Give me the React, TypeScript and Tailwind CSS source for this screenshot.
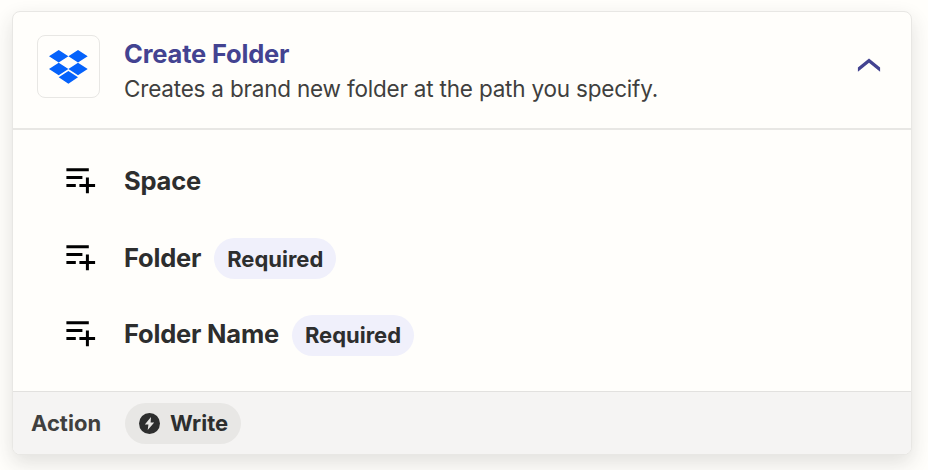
import type { ReactNode } from "react";

function DropboxLogo() {
  return (
    <svg width="39" height="34" viewBox="0 0 39 34" fill="#0562fb">
      <path d="M9.7 0 19.4 6.3 9.7 12.6 0 6.3ZM29 0 38.7 6.3 29 12.6 19.4 6.3ZM9.7 12.7 19.4 19 9.7 25.2 0 19ZM29 12.7 38.7 19 29 25.2 19.4 19ZM9.7 27.2 19.4 20.9 29 27.2 19.4 33.7Z" />
    </svg>
  );
}

function FieldIcon() {
  return (
    <svg width="30" height="28" viewBox="0 0 30 28" fill="#000">
      <path d="M.4 1.2H22.8V4.2H.4ZM.4 8.9H16.4V11.9H.4ZM.4 16.9H9.8V19.9H.4ZM13.4 16.9H19.9V10.6H22.9V16.9H29.1V19.9H22.9V26.3H19.9V19.9H13.4Z" />
    </svg>
  );
}

function Field({ children, required }: { children: ReactNode; required?: boolean }) {
  return (
    <li className="flex h-[41px] items-center">
      <span className="w-[58px] shrink-0">
        <FieldIcon />
      </span>
      <span className="text-[25.5px] leading-8 font-bold tracking-[-0.2px] text-[#2d2e2e]">{children}</span>
      {required && (
        <span className="mt-[2px] ml-[13px] flex h-[41px] w-[122px] shrink-0 items-center justify-center rounded-full bg-[#f0f0fb] pt-px text-[22px] font-bold text-[#2d2e2e]">
          Required
        </span>
      )}
    </li>
  );
}

export default function App() {
  return (
    <main className="h-[470px] w-[928px] overflow-hidden bg-[#fffefb] pt-[11px] pl-3 font-['Inter',sans-serif] whitespace-nowrap">
      <section className="flex h-[444px] w-[900px] flex-col overflow-hidden rounded-lg border border-[#e8e7e4] bg-[#fffefb] shadow-[0_8px_20px_rgba(45,46,46,0.14)]">
        <header className="flex h-[118px] shrink-0 items-start border-b-2 border-[#e8e7e4] pt-[23px] pl-6">
          <div className="flex size-[63px] items-center justify-center rounded-lg border border-[#e8e7e4]">
            <DropboxLogo />
          </div>
          <div className="ml-6">
            <h2 className="mt-px text-[25.5px] leading-9 font-bold tracking-[-0.18px] text-[#434391]">Create Folder</h2>
            <p className="mt-px text-[22.5px] leading-8 tracking-[-0.2px] text-[#403f3e]">
              Creates a brand new folder at the path you specify.
            </p>
          </div>
          <svg className="mt-[23px] mr-[30px] ml-auto" width="24" height="15" viewBox="0 0 24 15" fill="#434391">
            <path d="M12 .5 23.1 9.6V13.8L12 4.8 .9 13.8V9.6Z" />
          </svg>
        </header>
        <ul className="flex flex-1 flex-col gap-[35.5px] pt-[30.5px] pl-[53px]">
          <Field>Space</Field>
          <Field required>Folder</Field>
          <Field required>Folder Name</Field>
        </ul>
        <footer className="flex h-[63px] shrink-0 items-center border-t border-[#e2e1df] bg-[#f5f4f3] pl-[18px]">
          <span className="w-[94px] text-[22px] font-bold text-[#403f3e]">Action</span>
          <span className="flex h-[41px] w-[116px] items-center rounded-full bg-[#e8e7e5] pl-[14px] text-[22px] font-bold text-[#2d2e2e]">
            <svg className="mr-[10px]" width="21" height="21" viewBox="0 0 21 21">
              <circle cx="10.5" cy="10.5" r="10.5" fill="#2d2e2e" />
              <path d="M12 4 5.8 11.4H9.4L8.7 17 15.2 9.5H11.6Z" fill="#e8e7e5" />
            </svg>
            Write
          </span>
        </footer>
      </section>
    </main>
  );
}
